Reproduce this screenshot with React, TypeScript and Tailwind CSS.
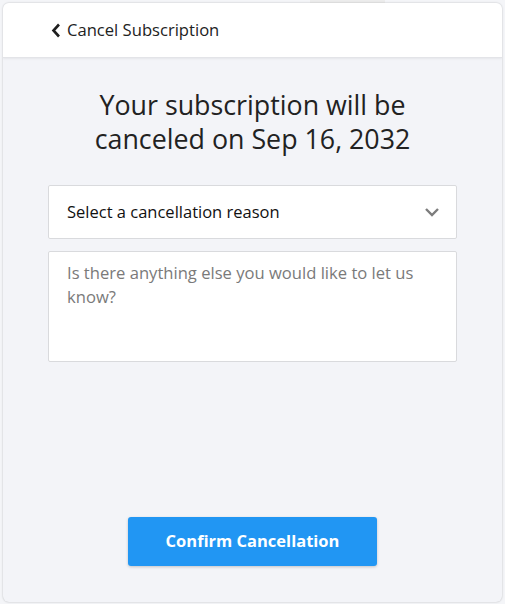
import React from "react";

export default function App() {
  return (
    <div className="w-[505px] h-[604px] bg-[#f4f5f8] p-[3px] relative" style={{ fontFamily: '"Open Sans", "Noto Sans", sans-serif' }}>
      <div className="absolute left-[310px] top-0 w-[75px] h-[3px] bg-[#ececec]" />
      <div className="relative h-[599px] w-[499px] rounded-[6px] bg-[#f3f4f8] shadow-[0_0_2px_rgba(0,0,0,0.25)] flex flex-col overflow-hidden">
        <div className="h-[55px] bg-white border-b border-[#e3e4e8] shadow-[0_1px_2px_rgba(0,0,0,0.06)] flex items-center pl-[48px]">
          <svg width="11" height="15" viewBox="0 0 11 15" className="mr-[5px]">
            <path d="M8 1.5 L2.5 7.5 L8 13.5" fill="none" stroke="#1f1f1f" strokeWidth="2.6" />
          </svg>
          <span className="text-[16.6px] text-[#222]">Cancel Subscription</span>
        </div>
        <div className="flex-1 flex flex-col items-center px-[45px]">
          <h1 className="mt-[30px] text-[26.8px] leading-[34px] text-[#222] text-center">
            Your subscription will be<br />canceled on Sep 16, 2032
          </h1>
          <div className="mt-[29px] w-[409px] h-[54px] bg-white border border-[#d9dadd] rounded-[2px] flex items-center justify-between pl-[18px] pr-[16px]">
            <span className="text-[16.5px] text-[#111]">Select a cancellation reason</span>
            <svg width="16" height="10" viewBox="0 0 16 10">
              <path d="M2 2 L8 8 L14 2" fill="none" stroke="#7d7d7d" strokeWidth="2.4" />
            </svg>
          </div>
          <div className="mt-[12px] w-[409px] h-[111px] bg-white border border-[#d9dadd] rounded-[2px] px-[18px] pt-[9px]">
            <p className="text-[16.6px] leading-[24px] text-[#7a7a7a]">Is there anything else you would like to let us know?</p>
          </div>
          <div className="flex-1" />
          <button className="mb-[36px] w-[249px] h-[49px] bg-[#2196f3] rounded-[3px] shadow-[0_1px_3px_rgba(0,0,0,0.2)] text-white font-bold text-[16.5px]">
            Confirm Cancellation
          </button>
        </div>
      </div>
    </div>
  );
}
